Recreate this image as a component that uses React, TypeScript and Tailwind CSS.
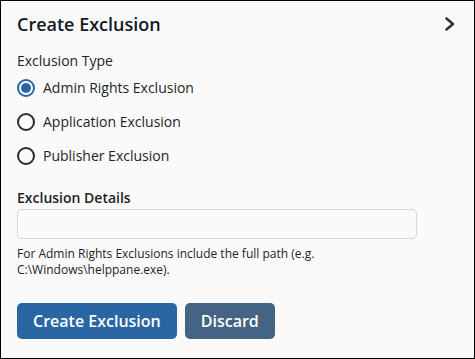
import React from "react";

const options = ["Admin Rights Exclusion", "Application Exclusion", "Publisher Exclusion"];

const Radio = ({ checked }: { checked: boolean }) => (
    <span
        className={
            checked
                ? "w-[18px] h-[18px] rounded-full border-2 border-[#2a66a4] flex items-center justify-center shrink-0"
                : "w-[18px] h-[18px] rounded-full border-2 border-[#272c33] shrink-0"
        }
    >
        {checked && <span className="w-[10px] h-[10px] rounded-full bg-[#2a66a4]" />}
    </span>
);

export default function App() {
    return (
        <div
            className="w-[475px] h-[359px] border border-black bg-[#fafafa] text-[#1f2328] flex flex-col"
            style={{ fontFamily: '"Open Sans", "Noto Sans", sans-serif' }}
        >
            <div className="flex items-center justify-between pl-4 pr-[18px] pt-[6px] h-[40px]">
                <h2 className="text-[18px] font-semibold leading-[26px] text-[#111827]">Create Exclusion</h2>
                <svg width="12" height="16" viewBox="0 0 12 16" fill="none">
                    <path d="M2.5 2.5L9 8L2.5 13.5" stroke="#2b3440" strokeWidth="2.6" strokeLinecap="round" strokeLinejoin="round" />
                </svg>
            </div>

            <div className="px-4 pt-[10px]">
                <div className="text-[14px] leading-[20px]">Exclusion Type</div>
                <div className="flex flex-col gap-[14px] mt-[7px]">
                    {options.map((o, i) => (
                        <label key={o} className="flex items-center gap-[8px] h-[20px]">
                            <Radio checked={i === 0} />
                            <span className="text-[14px] leading-[20px]">{o}</span>
                        </label>
                    ))}
                </div>

                <div className="text-[14px] font-semibold leading-[20px] mt-[22px]">Exclusion Details</div>
                <div className="w-[400px] h-[30px] mt-[1px] rounded-[5px] border border-[#d6d6d6] bg-[#fafafa]" />
                <p className="text-[12px] leading-[16px] mt-[7px] text-[#1f2328]">
                    For Admin Rights Exclusions include the full path (e.g.
                    <br />
                    C:\Windows\helppane.exe).
                </p>

                <div className="flex gap-[8px] mt-[25px]">
                    <button className="h-[36px] px-4 rounded-[5px] bg-[#2a66a4] text-white text-[16px] font-semibold">
                        Create Exclusion
                    </button>
                    <button className="h-[36px] px-4 rounded-[5px] bg-[#456384] text-white text-[16px] font-semibold">
                        Discard
                    </button>
                </div>
            </div>
        </div>
    );
}
